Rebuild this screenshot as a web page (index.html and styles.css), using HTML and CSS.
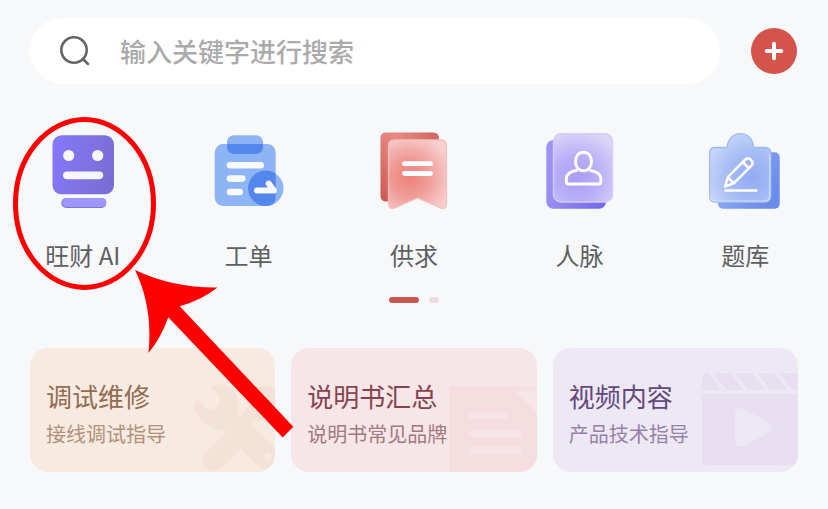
FILE: index.html
```html
<!DOCTYPE html>
<html lang="zh-CN">
<head>
<meta charset="utf-8">
<meta name="viewport" content="width=device-width, initial-scale=1">
<title>首页</title>
<link rel="stylesheet" href="styles.css">
</head>
<body>
<header class="topbar">
  <label class="search">
    <svg class="search-icon" viewBox="0 0 32 32" aria-hidden="true"><circle cx="15" cy="15" r="12.7"/><path d="M24 24l5 5"/></svg>
    <input class="search-input" type="search" placeholder="输入关键字进行搜索" aria-label="搜索">
  </label>
  <button class="add" type="button" aria-label="添加">
    <svg class="add-icon" viewBox="0 0 20 20" aria-hidden="true"><path d="M10 2.700v14.600M2.700 10h14.600"/></svg>
  </button>
</header>

<nav class="shortcuts">
  <a class="shortcut" href="#">
    <svg class="shortcut-icon" viewBox="41 128 84 84" aria-hidden="true">
      <defs><linearGradient id="robot" x1="0" y1="0.300" x2="1" y2="0.600"><stop offset="0" stop-color="#8577f8"/><stop offset="1" stop-color="#7a6dd2"/></linearGradient></defs>
      <rect x="52.500" y="135.300" width="61.500" height="59" rx="9" fill="url(#robot)"/>
      <circle cx="68.700" cy="155.500" r="5.600" fill="#f7f6fe"/><circle cx="97.700" cy="155.500" r="5.600" fill="#f7f6fe"/>
      <rect x="63" y="171.500" width="40.200" height="7.700" rx="3.850" fill="#f7f6fe"/>
      <rect x="61.300" y="198" width="45" height="10" rx="4.800" fill="#8074dd"/>
      <rect x="62" y="198" width="44.300" height="8.900" rx="4.400" fill="#a096f7"/>
    </svg>
    <span>旺财 AI</span>
  </a>
  <a class="shortcut" href="#">
    <svg class="shortcut-icon" viewBox="206 128 84 84" aria-hidden="true">
      <defs>
        <clipPath id="board"><rect x="214.700" y="144" width="61" height="62" rx="8.500"/></clipPath>
      </defs>
      <g fill="#8db4f4">
        <rect x="214.700" y="144" width="61" height="62" rx="8.500"/>
        <rect x="227" y="135.300" width="36" height="18.700" rx="7"/>
        <circle cx="265.800" cy="188.300" r="17.700"/>
      </g>
      <g fill="#5387ee" clip-path="url(#board)">
        <rect x="227" y="135.300" width="36" height="18.700" rx="7"/>
        <circle cx="265.800" cy="188.300" r="17.700"/>
      </g>
      <g fill="none" stroke="#f8fafe" stroke-width="6.600" stroke-linecap="round" stroke-linejoin="round">
        <path d="M230 165.200h30.700M230 178.600h12.300M230 192h9.700"/>
        <path d="M257 190.500h17l-5.300-6.800" stroke-width="6"/>
      </g>
    </svg>
    <span>工单</span>
  </a>
  <a class="shortcut" href="#">
    <svg class="shortcut-icon" viewBox="372 128 84 84" aria-hidden="true">
      <defs>
        <linearGradient id="ribbonBack" x1="1" y1="0" x2="0" y2="1"><stop offset="0" stop-color="#cd625d"/><stop offset="0.400" stop-color="#e98b84"/><stop offset="1" stop-color="#cc5750"/></linearGradient>
        <radialGradient id="ribbonFront" gradientUnits="userSpaceOnUse" cx="409" cy="177" r="43"><stop offset="0" stop-color="#ee807b"/><stop offset="0.450" stop-color="#f09b96"/><stop offset="1" stop-color="#f6cfce"/></radialGradient>
      </defs>
      <path d="M386 132.500h47q6 0 6 6v10h-45v53h-8q-5.500 0-5.500-6V138q0-5.500 5.500-5.500z" fill="url(#ribbonBack)"/>
      <path d="M395 140h45.500q6 0 6 6v57.500q0 6.500-6 4.300L417.500 198 395 207.800q-6.500 2.200-6.500-4.300V146q0-6 6.500-6z" fill="url(#ribbonFront)" stroke="#f6bfbc" stroke-width="1.300"/>
      <path d="M404.500 163.700h26M404.500 173.500h26" stroke="#fff" stroke-width="4.800" stroke-linecap="round"/>
    </svg>
    <span>供求</span>
  </a>
  <a class="shortcut" href="#">
    <svg class="shortcut-icon" viewBox="538 128 84 84" aria-hidden="true">
      <defs>
        <linearGradient id="peopleBack" x1="0" y1="0" x2="1" y2="1"><stop offset="0" stop-color="#a194f1"/><stop offset="0.500" stop-color="#998cf1"/><stop offset="1" stop-color="#6f65ea"/></linearGradient>
        <radialGradient id="peopleFront" gradientUnits="userSpaceOnUse" cx="577" cy="178" r="49"><stop offset="0" stop-color="#a99cf5"/><stop offset="0.450" stop-color="#b8aff6"/><stop offset="1" stop-color="#dcd6f6"/></radialGradient>
      </defs>
      <rect x="546.300" y="140" width="59.700" height="68.700" rx="7" fill="url(#peopleBack)"/>
      <rect x="553.500" y="133.700" width="59" height="68.300" rx="7.500" fill="url(#peopleFront)" stroke="#d3cbfb" stroke-width="1.400"/>
      <g fill="none" stroke="#fff" stroke-width="2.900" stroke-linejoin="round">
        <path d="M583.500 152.200c-5 0-8 4-8 9 0 5.600 3.300 9.600 8 9.600s8-4 8-9.600c0-5-3-9-8-9z"/>
        <path d="M577.500 170.300c-8 1.300-11.200 4-11.200 8.200v3.500q0 2 2 2h30.500q2 0 2-2v-3.500c0-4.200-3.600-6.900-11.300-8.200"/>
      </g>
    </svg>
    <span>人脉</span>
  </a>
  <a class="shortcut" href="#">
    <svg class="shortcut-icon" viewBox="703 128 84 84" aria-hidden="true">
      <defs>
        <linearGradient id="quizBack" x1="0" y1="0" x2="1" y2="0.600"><stop offset="0" stop-color="#9db9f6"/><stop offset="1" stop-color="#688bec"/></linearGradient>
        <radialGradient id="quizFront" gradientUnits="userSpaceOnUse" cx="752" cy="177" r="50"><stop offset="0" stop-color="#93abf3"/><stop offset="0.500" stop-color="#a5bcf5"/><stop offset="1" stop-color="#cbd9f7"/></radialGradient>
      </defs>
      <rect x="718" y="152.300" width="61.700" height="56.500" rx="5" fill="url(#quizBack)"/>
      <path d="M715 147.500h12V147c1-8 6-13.300 13.500-13.300S753 139 753.700 147v.5H765q5.700 0 5.700 5.700v43q0 5.800-5.700 5.800h-50q-5.300 0-5.300-5.800v-43q0-5.700 5.300-5.700z" fill="url(#quizFront)" stroke="#9db9f5" stroke-width="1.300"/>
      <path d="M710.700 196q0 5 5 5h48.500q5.500 0 5.500-5v-42" fill="none" stroke="#d6e1fc" stroke-width="1.200"/>
      <g fill="none" stroke="#fff" stroke-width="2.500" stroke-linejoin="round" stroke-linecap="round">
        <path d="M725 186.500l3-9.700 17.300-17.300q2.600-2.600 5.600.3l.6.700q2.500 2.700-.1 5.200L734 183.200zM743 162.200l5.600 6M728 177.500l5.500 5.500"/>
        <path d="M725.500 190.500h30.800"/>
      </g>
    </svg>
    <span>题库</span>
  </a>
</nav>

<div class="pager" aria-hidden="true"><i class="dot dot-active"></i><i class="dot"></i></div>

<main class="cards">
  <a class="card card-repair" href="#">
    <svg class="card-art" viewBox="191 348 84 124" aria-hidden="true">
      <path d="M210 386C218 383 229 384 235 392C238.500 397 239.500 405 237 414L240 416L250 405Q251 390 262 386Q270 384 276 390V412L251 424L276 449V460Q270 474 259 468L241 449L222 468Q215 473 207 469Q198 462 205 453L227 431Q210 430 200 419Q191 408 197.700 399L208 409Q211 412 214 409L218 405Q221 402 219 396Z" fill="#f5e2d6"/>
      <circle cx="267.500" cy="457" r="4" fill="#f7eae0"/>
    </svg>
    <strong class="card-title">调试维修</strong>
    <span class="card-note">接线调试指导</span>
  </a>
  <a class="card card-manual" href="#">
    <svg class="card-art" viewBox="453 348 84 124" aria-hidden="true">
      <path d="M450 386.500h65l22 25V472h-88v-85z" fill="#f5dde0"/>
      <path d="M515 390.500h22v22z" fill="#f7e6e8"/>
      <path d="M515 386.500h22v4h-22z" fill="#f5dde0"/>
      <path d="M469 412h38v7h-38zM469 430h52.500v7H469zM469 447h52.500v7H469z" fill="#f7e4e6"/>
    </svg>
    <strong class="card-title">说明书汇总</strong>
    <span class="card-note">说明书常见品牌</span>
  </a>
  <a class="card card-video" href="#">
    <svg class="card-art" viewBox="714 348 84 124" aria-hidden="true">
      <path d="M707 373h91v17h-96v-12q0-5 5-5zM702 394h96v71h-91q-5 0-5-5z" fill="#e7deef"/>
      <path d="M710 372l14 18M732 372l14 18M754 372l14 18M776 372l14 18" stroke="#eee8f4" stroke-width="4"/>
      <path d="M741 414l24 13.500-24 13.500z" fill="#eee7f4" stroke="#eee7f4" stroke-width="12" stroke-linejoin="round"/>
    </svg>
    <strong class="card-title">视频内容</strong>
    <span class="card-note">产品技术指导</span>
  </a>
</main>

<svg class="annotation" viewBox="0 0 300 445" aria-hidden="true">
  <ellipse cx="84.500" cy="203.500" rx="69" ry="84" fill="none" stroke="#f00" stroke-width="5"/>
  <path d="M135 270Q173 288 217.500 287.500Q202 300 179.700 306.300L293.300 426.700L282.700 437.500L168.300 317.300Q161 338 148.500 353Q153 307 135 270z" fill="#f00"/>
</svg>
</body>
</html>
```
FILE: styles.css
```css
* {
  box-sizing: border-box;
}

body {
  position: relative;
  margin: 0;
  background: #f7f8fa;
  font-family: "Noto Sans CJK SC", sans-serif;
  color: #5e5f61;
}

a {
  color: inherit;
  text-decoration: none;
}

.topbar {
  display: flex;
  align-items: center;
  gap: 31px;
  padding: 18px 31px 0 30px;
}

.search {
  display: flex;
  flex: 1;
  align-items: center;
  gap: 29px;
  height: 66px;
  padding: 0 29px;
  border-radius: 33px;
  background: #fff;
}

.search-icon {
  width: 32px;
  height: 32px;
  fill: none;
  stroke: #666;
  stroke-width: 2.6;
  stroke-linecap: round;
}

.search-input {
  flex: 1;
  min-width: 0;
  padding: 0;
  border: 0;
  outline: 0;
  background: none;
  font: 500 26px/38px "Noto Sans CJK SC", sans-serif;
  color: #5e5f61;
}

.search-input::placeholder {
  color: #aaa;
  opacity: 1;
}

.add {
  display: grid;
  place-items: center;
  width: 46px;
  height: 46px;
  padding: 0;
  border: 0;
  border-radius: 50%;
  background: #d4544b;
}

.add-icon {
  width: 20px;
  height: 20px;
  fill: none;
  stroke: #fff;
  stroke-width: 4;
  stroke-linecap: round;
}

.shortcuts {
  display: grid;
  grid-template-columns: repeat(5, 1fr);
  margin-top: 44px;
}

.shortcut {
  display: flex;
  flex-direction: column;
  align-items: center;
  gap: 26px;
  font-size: 24px;
  line-height: 34px;
}

.shortcut-icon {
  width: 84px;
  height: 84px;
}

.pager {
  display: flex;
  justify-content: center;
  gap: 10px;
  margin-top: 25px;
}

.dot {
  width: 10px;
  height: 6px;
  border-radius: 3px;
  background: #f0dcde;
}

.dot-active {
  width: 30px;
  background: #cb574f;
}

.cards {
  display: grid;
  grid-template-columns: repeat(3, 1fr);
  gap: 16px;
  margin-top: 45px;
  padding: 0 30px 37px;
}

.card {
  position: relative;
  display: flex;
  flex-direction: column;
  gap: 6px;
  padding: 30px 16px 24px;
  border-radius: 18px;
  overflow: hidden;
}

.card-art {
  position: absolute;
  top: 0;
  right: 0;
  width: 84px;
  height: 124px;
  overflow: visible;
}

.card-title,
.card-note {
  position: relative;
  font-weight: 400;
  white-space: nowrap;
}

.card-title {
  font-size: 26px;
  line-height: 36px;
}

.card-note {
  font-size: 20px;
  line-height: 28px;
}

.card-repair {
  background: #f7eae0;
  color: #926b51;
}

.card-repair .card-note {
  color: #b0917b;
}

.card-manual {
  background: #f7e6e8;
  color: #85444d;
}

.card-manual .card-note {
  color: #a17980;
}

.card-video {
  background: #eee8f4;
  color: #62487f;
}

.card-video .card-note {
  color: #9681a9;
}

.annotation {
  position: absolute;
  top: 0;
  left: 0;
  width: 300px;
  height: 445px;
  pointer-events: none;
}
```
